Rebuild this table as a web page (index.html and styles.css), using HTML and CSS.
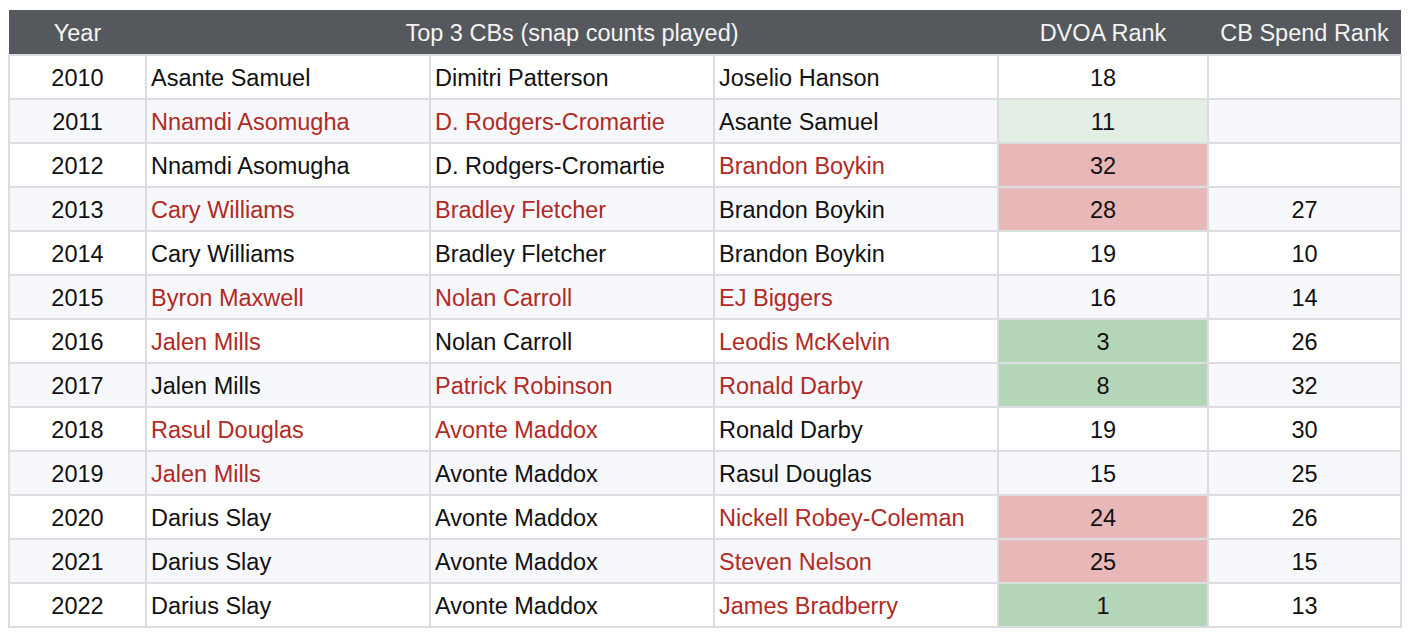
FILE: index.html
```html
<!DOCTYPE html>
<html>
<head>
<meta charset="utf-8">
<link rel="stylesheet" href="styles.css">
</head>
<body>
<table class="cb-table">
  <colgroup>
    <col class="c-year"><col class="c-name"><col class="c-name"><col class="c-name"><col class="c-dvoa"><col class="c-spend">
  </colgroup>
  <thead>
    <tr>
      <th>Year</th>
      <th colspan="3">Top 3 CBs (snap counts played)</th>
      <th>DVOA Rank</th>
      <th>CB Spend Rank</th>
    </tr>
  </thead>
  <tbody>
    <tr><td class="yr">2010</td><td class="nm">Asante Samuel</td><td class="nm">Dimitri Patterson</td><td class="nm">Joselio Hanson</td><td class="num">18</td><td class="num"></td></tr>
    <tr><td class="yr">2011</td><td class="nm new">Nnamdi Asomugha</td><td class="nm new">D. Rodgers-Cromartie</td><td class="nm">Asante Samuel</td><td class="num good-light">11</td><td class="num"></td></tr>
    <tr><td class="yr">2012</td><td class="nm">Nnamdi Asomugha</td><td class="nm">D. Rodgers-Cromartie</td><td class="nm new">Brandon Boykin</td><td class="num bad">32</td><td class="num"></td></tr>
    <tr><td class="yr">2013</td><td class="nm new">Cary Williams</td><td class="nm new">Bradley Fletcher</td><td class="nm">Brandon Boykin</td><td class="num bad">28</td><td class="num">27</td></tr>
    <tr><td class="yr">2014</td><td class="nm">Cary Williams</td><td class="nm">Bradley Fletcher</td><td class="nm">Brandon Boykin</td><td class="num">19</td><td class="num">10</td></tr>
    <tr><td class="yr">2015</td><td class="nm new">Byron Maxwell</td><td class="nm new">Nolan Carroll</td><td class="nm new">EJ Biggers</td><td class="num">16</td><td class="num">14</td></tr>
    <tr><td class="yr">2016</td><td class="nm new">Jalen Mills</td><td class="nm">Nolan Carroll</td><td class="nm new">Leodis McKelvin</td><td class="num good">3</td><td class="num">26</td></tr>
    <tr><td class="yr">2017</td><td class="nm">Jalen Mills</td><td class="nm new">Patrick Robinson</td><td class="nm new">Ronald Darby</td><td class="num good">8</td><td class="num">32</td></tr>
    <tr><td class="yr">2018</td><td class="nm new">Rasul Douglas</td><td class="nm new">Avonte Maddox</td><td class="nm">Ronald Darby</td><td class="num">19</td><td class="num">30</td></tr>
    <tr><td class="yr">2019</td><td class="nm new">Jalen Mills</td><td class="nm">Avonte Maddox</td><td class="nm">Rasul Douglas</td><td class="num">15</td><td class="num">25</td></tr>
    <tr><td class="yr">2020</td><td class="nm">Darius Slay</td><td class="nm">Avonte Maddox</td><td class="nm new">Nickell Robey-Coleman</td><td class="num bad">24</td><td class="num">26</td></tr>
    <tr><td class="yr">2021</td><td class="nm">Darius Slay</td><td class="nm">Avonte Maddox</td><td class="nm new">Steven Nelson</td><td class="num bad">25</td><td class="num">15</td></tr>
    <tr><td class="yr">2022</td><td class="nm">Darius Slay</td><td class="nm">Avonte Maddox</td><td class="nm new">James Bradberry</td><td class="num good">1</td><td class="num">13</td></tr>
  </tbody>
</table>
</body>
</html>
```

FILE: styles.css
```css
html, body {
  margin: 0;
  padding: 0;
  background: #ffffff;
}
body {
  padding: 10px 8px 0 8px;
  font-family: "Liberation Sans", Arial, sans-serif;
}
.cb-table {
  border-collapse: collapse;
  table-layout: fixed;
  width: 1392px;
  font-size: 23.5px;
  color: #111111;
}
.c-year { width: 137px; }
.c-name { width: 284px; }
.c-dvoa { width: 210px; }
.c-spend { width: 193px; }

.cb-table thead th {
  background: #55585c;
  color: #f4f4f4;
  font-weight: normal;
  height: 41px;
  padding: 3px 4px 0 4px;
  text-align: center;
  border: 0;
  white-space: nowrap;
}
.cb-table tbody td {
  height: 40px;
  padding: 2px 4px 0 4px;
  border: 2px solid #dcdde1;
  white-space: nowrap;
  vertical-align: middle;
}
.cb-table tbody tr:nth-child(even) td {
  background: #f7f8fc;
}
.yr, .num { text-align: center; }
.nm { text-align: left; padding-left: 3px; }
.new { color: #b12a25; }
.cb-table tbody tr td.good-light { background: #e3eee5; }
.cb-table tbody tr td.good { background: #b5d5b9; }
.cb-table tbody tr td.bad { background: #e8b7b7; }
```
